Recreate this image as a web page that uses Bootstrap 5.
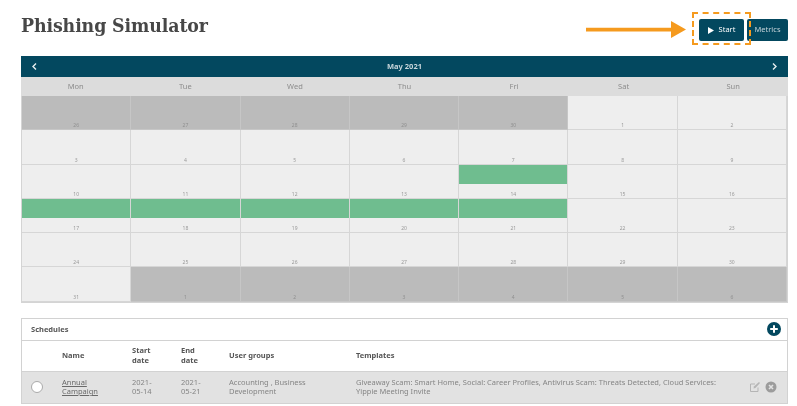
<!DOCTYPE html>
<html lang="en">
<head>
<meta charset="utf-8">
<title>Phishing Simulator</title>
<link href="https://cdn.jsdelivr.net/npm/bootstrap@5.3.0/dist/css/bootstrap.min.css" rel="stylesheet">
<style>
html,body{height:406px;overflow:hidden;background:#fff}
body{font-family:"Noto Sans","Open Sans",sans-serif;color:#555}
.pg{padding:0 9px 0 21px;filter:blur(.7px);position:relative;height:406px}
.topbar{height:56px;padding-top:19px}
.ttl{font-family:"DejaVu Serif Condensed","DejaVu Serif",serif;font-weight:700;font-size:19.3px;line-height:1;color:#474747;margin:-3px 0 0;letter-spacing:-.1px}
.tbtn{background:#03485f;color:#fff;border:0;border-radius:2px;height:22px;font-size:7.5px;padding:0;display:flex;align-items:center;justify-content:center}
.tbtn-start{width:45px;gap:5px}
.tbtn-metrics{width:41px;margin-left:3px;color:#c4d2d8}
.calhead{background:#03485f;color:#c8d6db;height:21px;font-size:7.5px;font-weight:700;padding:0 11px}
.wk{display:grid;grid-template-columns:repeat(7,1fr);background:#dcdcdc;height:19px;font-size:7.5px;color:#8c8c8c;text-align:center;line-height:18px}
.gridcal{display:grid;grid-template-columns:repeat(7,1fr);grid-auto-rows:34.3px;background:#d8d8d8;border-right:1px solid #d4d4d4;border-left:1px solid #d4d4d4;border-bottom:1px solid #d4d4d4}
.dc{background:#eee;border-right:1px solid #d6d6d6;border-bottom:1px solid #d6d6d6;font-size:5px;color:#999;text-align:center;display:flex;flex-direction:column;justify-content:flex-end;line-height:8px}
.dc.off{background:#bbb;border-color:#c6c6c6;color:#8f8f8f}
.ev{background:#6fbd8f;height:19.5px;margin-bottom:auto}
.panel{border:1px solid #d2d2d2;margin-top:15px;background:#fff}
.phead{height:22px;border-bottom:1px solid #d2d2d2;padding:0 6px 0 9px;font-size:7.5px;font-weight:700;color:#555}
.plus{width:14px;height:14px}
.cols{display:grid;grid-template-columns:40px 70px 49px 48px 127px 1fr 38px}
.thd{height:30px;font-size:7.5px;font-weight:700;line-height:9.5px;color:#555}
.rw{background:#e2e2e2;height:32px;border-top:1px solid #d2d2d2;font-size:7.5px;line-height:9.5px;color:#858585}
.rw a{color:#6a6a6a}
.radio{width:12px;height:12px;border-radius:50%;background:#fff;border:1px solid #aaa;margin-left:9px}
.mark-box{position:absolute;left:692px;top:12px;width:59px;height:33px;border:2px dashed #f59a1e}
.mark-arrow{position:absolute;left:586px;top:21px}
</style>
</head>
<body>
<div class="pg">
  <div class="topbar d-flex justify-content-between align-items-start">
    <h1 class="ttl">Phishing Simulator</h1>
    <div class="d-flex">
      <button class="tbtn tbtn-start"><svg width="6" height="7" viewBox="0 0 6 7"><path d="M0 0l6 3.5L0 7z" fill="#fff"/></svg>Start</button>
      <button class="tbtn tbtn-metrics">Metrics</button>
    </div>
  </div>
  <div class="calhead d-flex justify-content-between align-items-center">
    <svg width="5" height="7" viewBox="0 0 5 7"><path d="M4 .5L1 3.5l3 3" fill="none" stroke="#e8eef0" stroke-width="1.4"/></svg>
    <span>May 2021</span>
    <svg width="5" height="7" viewBox="0 0 5 7"><path d="M1 .5l3 3-3 3" fill="none" stroke="#e8eef0" stroke-width="1.4"/></svg>
  </div>
  <div class="wk"><span>Mon</span><span>Tue</span><span>Wed</span><span>Thu</span><span>Fri</span><span>Sat</span><span>Sun</span></div>
  <div class="gridcal">
    <div class="dc off">26</div><div class="dc off">27</div><div class="dc off">28</div><div class="dc off">29</div><div class="dc off">30</div><div class="dc">1</div><div class="dc">2</div>
    <div class="dc">3</div><div class="dc">4</div><div class="dc">5</div><div class="dc">6</div><div class="dc">7</div><div class="dc">8</div><div class="dc">9</div>
    <div class="dc">10</div><div class="dc">11</div><div class="dc">12</div><div class="dc">13</div><div class="dc"><div class="ev"></div>14</div><div class="dc">15</div><div class="dc">16</div>
    <div class="dc"><div class="ev"></div>17</div><div class="dc"><div class="ev"></div>18</div><div class="dc"><div class="ev"></div>19</div><div class="dc"><div class="ev"></div>20</div><div class="dc"><div class="ev"></div>21</div><div class="dc">22</div><div class="dc">23</div>
    <div class="dc">24</div><div class="dc">25</div><div class="dc">26</div><div class="dc">27</div><div class="dc">28</div><div class="dc">29</div><div class="dc">30</div>
    <div class="dc">31</div><div class="dc off">1</div><div class="dc off">2</div><div class="dc off">3</div><div class="dc off">4</div><div class="dc off">5</div><div class="dc off">6</div>
  </div>
  <div class="panel">
    <div class="phead d-flex justify-content-between align-items-center">
      <span>Schedules</span>
      <svg class="plus" viewBox="0 0 14 14"><circle cx="7" cy="7" r="7" fill="#03485f"/><path d="M7 3.2v7.6M3.2 7h7.6" stroke="#fff" stroke-width="2"/></svg>
    </div>
    <div class="cols thd align-items-center">
      <span></span><span>Name</span><span>Start<br>date</span><span>End<br>date</span><span>User groups</span><span>Templates</span><span></span>
    </div>
    <div class="cols rw align-items-center">
      <span class="radio"></span>
      <a href="#">Annual<br>Campaign</a>
      <span>2021-<br>05-14</span>
      <span>2021-<br>05-21</span>
      <span>Accounting , Business<br>Development</span>
      <span>Giveaway Scam: Smart Home, Social: Career Profiles, Antivirus Scam: Threats Detected, Cloud Services:<br>Yippie Meeting Invite</span>
      <span class="d-flex align-items-center gap-1">
        <svg width="12" height="12" viewBox="0 0 12 12"><path d="M9 6.5V10.5H1.5V3H6" fill="none" stroke="#b5b5b5" stroke-width="1"/><path d="M4.5 7.5l.4-2L10 1l1 1-4.6 5z" fill="#b5b5b5"/></svg>
        <svg width="12" height="12" viewBox="0 0 12 12"><circle cx="6" cy="6" r="5.5" fill="#9c9c9c"/><path d="M4 4l4 4M8 4l-4 4" stroke="#e2e2e2" stroke-width="1.6"/></svg>
      </span>
    </div>
  </div>
  <svg class="mark-arrow" width="100" height="18" viewBox="0 0 100 18"><path d="M0 6.7h85v-6.7L100 8.5 85 17v-6.5H0z" fill="#f59a1e"/></svg>
  <div class="mark-box"></div>
</div>
<script src="https://cdn.jsdelivr.net/npm/bootstrap@5.3.0/dist/js/bootstrap.bundle.min.js"></script>
</body>
</html>
